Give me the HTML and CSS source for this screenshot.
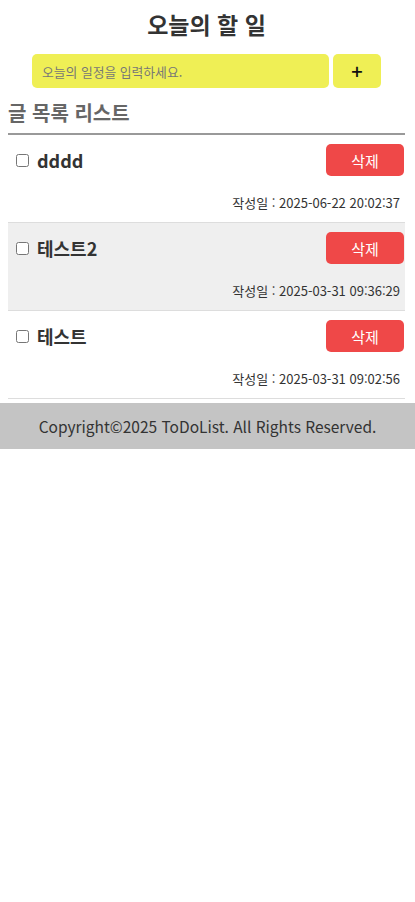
FILE: index.html
```html
<!DOCTYPE html>
<html lang="ko">
<head>
<meta charset="utf-8">
<title>오늘의 할 일</title>
<link rel="stylesheet" href="styles.css">
</head>
<body>
<main class="main">
  <h1 class="title">오늘의 할 일</h1>
  <form class="add-form">
    <input class="add-input" type="text" placeholder="오늘의 일정을 입력하세요.">
    <button class="add-btn" type="button">+</button>
  </form>
  <h2 class="list-title">글 목록 리스트</h2>
  <ul class="todo-list">
    <li class="todo">
      <div class="todo-row">
        <label class="todo-label"><input type="checkbox" class="todo-check"><span class="todo-text">dddd</span></label>
        <button class="del-btn" type="button">삭제</button>
      </div>
      <div class="todo-date">작성일 : 2025-06-22 20:02:37</div>
    </li>
    <li class="todo alt">
      <div class="todo-row">
        <label class="todo-label"><input type="checkbox" class="todo-check"><span class="todo-text">테스트2</span></label>
        <button class="del-btn" type="button">삭제</button>
      </div>
      <div class="todo-date">작성일 : 2025-03-31 09:36:29</div>
    </li>
    <li class="todo">
      <div class="todo-row">
        <label class="todo-label"><input type="checkbox" class="todo-check"><span class="todo-text">테스트</span></label>
        <button class="del-btn" type="button">삭제</button>
      </div>
      <div class="todo-date">작성일 : 2025-03-31 09:02:56</div>
    </li>
  </ul>
</main>
<footer class="footer">Copyright©2025 ToDoList. All Rights Reserved.</footer>
</body>
</html>
```

FILE: styles.css
```css
* { box-sizing: border-box; }
body {
  margin: 0;
  font-family: "Noto Sans CJK KR", "Noto Sans", sans-serif;
  color: #333;
  background: #fff;
}
.main {
  padding: 0 10px 0 8px;
}
.title {
  margin: 0;
  padding-top: 6px;
  height: 46px;
  text-align: center;
  font-size: 23px;
  font-weight: 700;
  line-height: 36px;
  color: #333;
}
.add-form {
  display: flex;
  justify-content: center;
  gap: 4px;
  margin: 8px 0 0 0;
}
.add-input {
  width: 297px;
  height: 34px;
  border: none;
  border-radius: 5px;
  background: #efef55;
  padding: 0 10px;
  font-family: inherit;
  font-size: 12.8px;
  color: #333;
  outline: none;
}
.add-input::placeholder { color: #777; }
.add-btn {
  width: 48px;
  height: 34px;
  border: none;
  border-radius: 5px;
  background: #efef55;
  font-family: inherit;
  font-size: 20px;
  font-weight: 500;
  color: #111;
  line-height: 1;
  padding: 0;
}
.list-title {
  margin: 11px 0 0 0;
  font-size: 20px;
  font-weight: 700;
  color: #666;
  line-height: 28px;
  padding-bottom: 6px;
  border-bottom: 2px solid #999;
}
.todo-list {
  list-style: none;
  margin: 0;
  padding: 0;
}
.todo {
  height: 88px;
  padding: 9px 1px 0 7px;
  border-bottom: 1px solid #ddd;
}
.todo.alt { background: #efefef; }
.todo-row {
  display: flex;
  justify-content: space-between;
  align-items: center;
  height: 32px;
}
.todo-label {
  display: flex;
  align-items: center;
}
.todo-check {
  margin: 0 8px 0 1px;
  width: 13px;
  height: 13px;
}
.todo-text {
  font-size: 18px;
  font-weight: 700;
  color: #333;
}
.del-btn {
  width: 78px;
  height: 32px;
  border: none;
  border-radius: 5px;
  background: #ef4848;
  color: #fff;
  font-family: inherit;
  font-size: 15px;
  padding: 0;
}
.todo-date {
  text-align: right;
  padding-right: 4px;
  margin-top: 17px;
  font-size: 13px;
  line-height: 20px;
  color: #333;
}
.footer {
  margin-top: 4px;
  height: 46px;
  background: #c4c4c4;
  text-align: center;
  font-family: "Noto Sans CJK KR", "Noto Sans", sans-serif;
  font-size: 15.5px;
  line-height: 46px;
  color: #333;
}
```
